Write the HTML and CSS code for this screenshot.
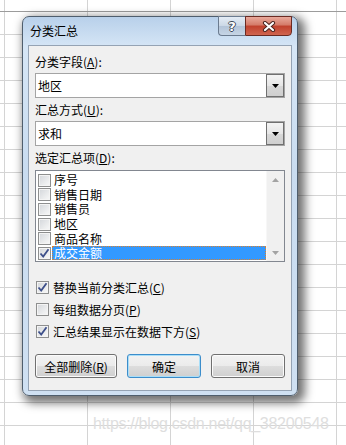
FILE: index.html
```html
<!DOCTYPE html>
<html lang="zh-CN">
<head>
    <meta charset="UTF-8">
    <meta name="viewport" content="width=device-width, initial-scale=1.0">
    <title>分类汇总</title>
    <link rel="stylesheet" href="styles.css">
</head>
<body>
    <div class="dialog">
        <div class="titlebar">
            <span class="title">分类汇总</span>
            <div class="caption-buttons">
                <span class="cap-btn help">?</span>
                <span class="cap-btn close">
                    <svg width="14" height="11" viewBox="0 0 14 11">
                        <path d="M3 2 L11 9 M11 2 L3 9" stroke="#4a2520" stroke-width="4.2" stroke-linecap="round"/>
                        <path d="M3 2 L11 9 M11 2 L3 9" stroke="#ffffff" stroke-width="2.2" stroke-linecap="round"/>
                    </svg>
                </span>
            </div>
        </div>

        <div class="client">
            <div class="label first">分类字段(<u>A</u>):</div>
            <div class="combo">
                <span class="combo-text">地区</span>
                <span class="drop-btn">
                    <svg width="7" height="4" viewBox="0 0 7 4"><polygon points="0,0 7,0 3.5,4" fill="#000"/></svg>
                </span>
            </div>

            <div class="label">汇总方式(<u>U</u>):</div>
            <div class="combo">
                <span class="combo-text">求和</span>
                <span class="drop-btn">
                    <svg width="7" height="4" viewBox="0 0 7 4"><polygon points="0,0 7,0 3.5,4" fill="#000"/></svg>
                </span>
            </div>

            <div class="label">选定汇总项(<u>D</u>):</div>
            <div class="listbox">
                <div class="list-items">
                    <div class="item"><span class="check"></span><span class="item-text">序号</span></div>
                    <div class="item"><span class="check"></span><span class="item-text">销售日期</span></div>
                    <div class="item"><span class="check"></span><span class="item-text">销售员</span></div>
                    <div class="item"><span class="check"></span><span class="item-text">地区</span></div>
                    <div class="item"><span class="check"></span><span class="item-text">商品名称</span></div>
                    <div class="item">
                        <span class="check checked">
                            <svg width="11" height="11" viewBox="0 0 11 11"><path d="M1.5 5.5 L4.2 8.6 L9.5 1.2" stroke="#3d4f8a" stroke-width="1.8" fill="none"/></svg>
                        </span>
                        <span class="item-text selected">成交金额</span>
                    </div>
                </div>
                <div class="scrollbar">
                    <span class="scroll-arrow">
                        <svg width="7" height="4" viewBox="0 0 7 4"><polygon points="0,4 7,4 3.5,0" fill="#a3a3a3"/></svg>
                    </span>
                    <span class="scroll-arrow">
                        <svg width="7" height="4" viewBox="0 0 7 4"><polygon points="0,0 7,0 3.5,4" fill="#a3a3a3"/></svg>
                    </span>
                </div>
            </div>

            <div class="options">
                <div class="option">
                    <span class="check checked">
                        <svg width="11" height="11" viewBox="0 0 11 11"><path d="M1.5 5.5 L4.2 8.6 L9.5 1.2" stroke="#3d4f8a" stroke-width="1.8" fill="none"/></svg>
                    </span>
                    <span>替换当前分类汇总(<u>C</u>)</span>
                </div>
                <div class="option">
                    <span class="check"></span>
                    <span>每组数据分页(<u>P</u>)</span>
                </div>
                <div class="option">
                    <span class="check checked">
                        <svg width="11" height="11" viewBox="0 0 11 11"><path d="M1.5 5.5 L4.2 8.6 L9.5 1.2" stroke="#3d4f8a" stroke-width="1.8" fill="none"/></svg>
                    </span>
                    <span>汇总结果显示在数据下方(<u>S</u>)</span>
                </div>
            </div>

            <div class="buttons">
                <button class="btn wide">全部删除(<u>R</u>)</button>
                <button class="btn default">确定</button>
                <button class="btn">取消</button>
            </div>
        </div>
    </div>

    <div class="watermark">https://blog.csdn.net/qq_38200548</div>
</body>
</html>
```

FILE: styles.css
```css
body {
    margin: 0;
    width: 346px;
    height: 445px;
    overflow: hidden;
    position: relative;
    font-family: "Noto Sans CJK SC", "Noto Sans", sans-serif;
    font-size: 12px;
    color: #000;
    background-color: #fff;
    background-image:
        linear-gradient(to bottom, transparent 11px, #9c9c9c 11px, #9c9c9c 12px, transparent 12px),
        linear-gradient(to right, #d4d4d4 1px, transparent 1px),
        linear-gradient(to bottom, #d4d4d4 1px, transparent 1px);
    background-size: 100% 100%, 83px 23px, 83px 23px;
    background-position: 0 0, 4px 11px, 4px 11px;
    background-repeat: no-repeat, repeat, repeat;
}

/* window on the sheet */
.dialog {
    position: absolute;
    left: 22px;
    top: 16px;
    width: 276px;
    height: 380px;
    box-sizing: border-box;
    padding: 0 5px 4px 5px;
    display: flex;
    flex-direction: column;
    border: 1px solid #4f5e6d;
    border-radius: 7px;
    background: linear-gradient(to bottom, #b8d0ea 0%, #d6e6f6 8%, #c9dcf0 40%, #cfe0f2 100%);
    box-shadow: 4px 4px 10px 3px rgba(0, 0, 0, 0.55);
}

.titlebar {
    height: 28px;
    display: flex;
    align-items: flex-start;
}

.title {
    padding-left: 2px;
    line-height: 28px;
    font-size: 12px;
}

.caption-buttons {
    margin-left: auto;
    margin-top: -1px;
    display: flex;
}

.cap-btn {
    height: 20px;
    box-sizing: border-box;
    display: flex;
    align-items: center;
    justify-content: center;
}

.help {
    width: 27px;
    border: 1px solid #6b7b8f;
    border-right: none;
    border-radius: 0 0 0 4px;
    background: linear-gradient(to bottom, #e4ecf5 0%, #cbd8e6 50%, #b3c4d8 51%, #c6d5e5 100%);
    color: #fff;
    font-family: "DejaVu Sans", sans-serif;
    font-weight: bold;
    font-size: 13px;
    text-shadow: -1px 0 #3f4a57, 1px 0 #3f4a57, 0 -1px #3f4a57, 0 1px #3f4a57;
}

.close {
    width: 47px;
    border: 1px solid #6a2a22;
    border-radius: 0 0 4px 0;
    background: linear-gradient(to bottom, #e9a99b 0%, #d47a68 45%, #c0402c 50%, #d0654f 100%);
}

.client {
    flex: 1;
    border: 1px solid #95a3b4;
    background-color: #f0f0f0;
    padding: 0 6px;
}

.label {
    line-height: 16px;
    margin-top: 4px;
}

.label.first {
    margin-top: 8px;
}

.combo {
    margin-top: 3px;
    height: 25px;
    box-sizing: border-box;
    border: 1px solid #a4a4a4;
    background-color: #fff;
    display: flex;
    align-items: center;
}

.combo-text {
    padding-left: 2px;
}

.drop-btn {
    margin-left: auto;
    width: 18px;
    height: 100%;
    box-sizing: border-box;
    border: 1px solid #707070;
    background: linear-gradient(to bottom, #f4f4f4 0%, #e6e6e6 50%, #d8d8d8 51%, #cfcfcf 100%);
    display: flex;
    align-items: center;
    justify-content: center;
}

.listbox {
    margin-top: 4px;
    height: 92px;
    box-sizing: border-box;
    border: 1px solid #828790;
    background-color: #fff;
    display: flex;
}

.list-items {
    flex: 1;
    padding-top: 2px;
}

.item {
    height: 14.6px;
    display: flex;
    align-items: center;
    padding-left: 2px;
}

.item .check {
    margin-right: 1px;
}

.item-text {
    flex: 1;
    line-height: 14px;
    padding-left: 2px;
}

.item-text.selected {
    background-color: #3399ff;
    color: #fff;
    outline: 1px dotted #d9802f;
    outline-offset: -1px;
}

.scrollbar {
    width: 17px;
    background-color: #f0f0f0;
    border-left: 1px solid #f7f7f7;
    display: flex;
    flex-direction: column;
    justify-content: space-between;
}

.scroll-arrow {
    height: 17px;
    display: flex;
    align-items: center;
    justify-content: center;
}

.check {
    width: 13px;
    height: 13px;
    box-sizing: border-box;
    border: 1px solid #8e8f8f;
    background: linear-gradient(135deg, #d3d6da 0%, #eeeff0 70%, #f8f8f8 100%);
    box-shadow: inset 0 0 0 1px #f4f4f4;
    display: flex;
    align-items: center;
    justify-content: center;
}

.options {
    margin-top: 14px;
}

.option {
    height: 22px;
    display: flex;
    align-items: center;
    padding-left: 1px;
}

.option .check {
    margin-right: 4px;
}

.buttons {
    margin-top: 12px;
    display: flex;
    justify-content: space-between;
}

.btn {
    width: 74px;
    height: 24px;
    padding: 0;
    border: 1px solid #707070;
    border-radius: 3px;
    background: linear-gradient(to bottom, #f2f2f2 0%, #ebebeb 50%, #dddddd 51%, #cfcfcf 100%);
    box-shadow: inset 0 0 0 1px #fbfbfb;
    font-family: "Noto Sans CJK SC", "Noto Sans", sans-serif;
    font-size: 12px;
    color: #000;
}

.btn.wide {
    width: 82px;
}

.btn.default {
    border-color: #3c8dcb;
    box-shadow: inset 0 0 0 1px #a9def8;
}

.watermark {
    position: absolute;
    left: 93px;
    top: 415px;
    font-family: "Liberation Sans", Arial, sans-serif;
    font-size: 16px;
    letter-spacing: -0.3px;
    color: #dedede;
    white-space: nowrap;
}
```
